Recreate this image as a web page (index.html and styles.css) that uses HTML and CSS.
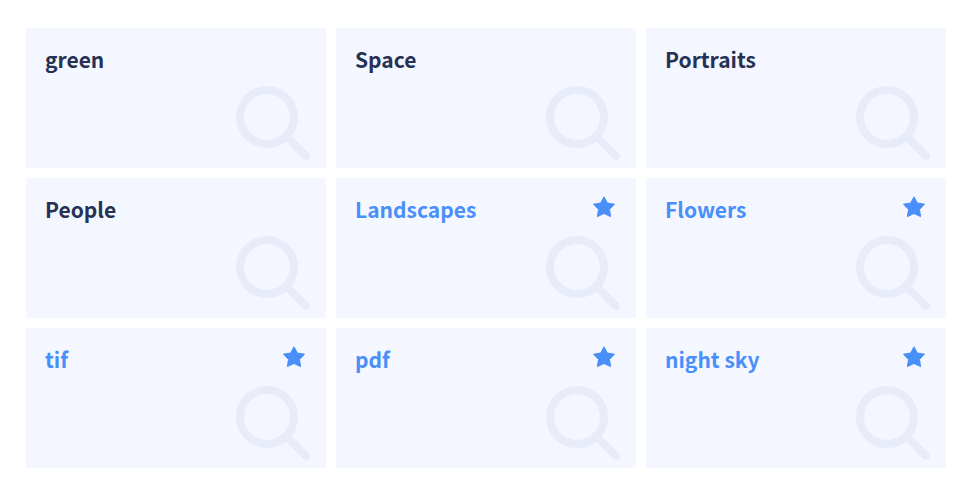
FILE: index.html
```
<!DOCTYPE html>
<html lang="en">
<head>
    <meta charset="UTF-8">
    <meta name="viewport" content="width=device-width, initial-scale=1.0">
    <title>Saved Searches</title>
    <link rel="stylesheet" href="styles.css">
</head>
<body>
    <!-- Shared icons -->
    <svg class="icon-defs" aria-hidden="true">
        <symbol id="icon-search" viewBox="0 0 75 75">
            <circle cx="31" cy="31" r="27" />
            <path d="M50 50 L70 70" />
        </symbol>
        <symbol id="icon-star" viewBox="0 0 24 24">
            <path d="M12 1.800 L15.300 8 L22.500 9.200 L17.500 14.400 L18.600 21.600 L12 18.500 L5.400 21.600 L6.500 14.400 L1.500 9.200 L8.700 8 Z" />
        </symbol>
    </svg>

    <main class="search-grid">
        <a class="card" href="#green">
            <h2 class="card-title">green</h2>
            <svg class="search-icon"><use href="#icon-search" /></svg>
        </a>
        <a class="card" href="#space">
            <h2 class="card-title">Space</h2>
            <svg class="search-icon"><use href="#icon-search" /></svg>
        </a>
        <a class="card" href="#portraits">
            <h2 class="card-title">Portraits</h2>
            <svg class="search-icon"><use href="#icon-search" /></svg>
        </a>
        <a class="card" href="#people">
            <h2 class="card-title">People</h2>
            <svg class="search-icon"><use href="#icon-search" /></svg>
        </a>
        <a class="card starred" href="#landscapes">
            <h2 class="card-title">Landscapes</h2>
            <svg class="star-icon"><use href="#icon-star" /></svg>
            <svg class="search-icon"><use href="#icon-search" /></svg>
        </a>
        <a class="card starred" href="#flowers">
            <h2 class="card-title">Flowers</h2>
            <svg class="star-icon"><use href="#icon-star" /></svg>
            <svg class="search-icon"><use href="#icon-search" /></svg>
        </a>
        <a class="card starred" href="#tif">
            <h2 class="card-title">tif</h2>
            <svg class="star-icon"><use href="#icon-star" /></svg>
            <svg class="search-icon"><use href="#icon-search" /></svg>
        </a>
        <a class="card starred" href="#pdf">
            <h2 class="card-title">pdf</h2>
            <svg class="star-icon"><use href="#icon-star" /></svg>
            <svg class="search-icon"><use href="#icon-search" /></svg>
        </a>
        <a class="card starred" href="#night-sky">
            <h2 class="card-title">night sky</h2>
            <svg class="star-icon"><use href="#icon-star" /></svg>
            <svg class="search-icon"><use href="#icon-search" /></svg>
        </a>
    </main>
</body>
</html>
```

FILE: styles.css
```
:root {
    --card-bg: #f4f7ff;
    --icon-color: #e8ebf8;
    --text-primary: #263154;
    --starred: #498ff9;
}

* {
    margin: 0;
    padding: 0;
    box-sizing: border-box;
}

body {
    font-family: 'Source Sans Pro', 'Noto Sans CJK SC', sans-serif;
    background: #ffffff;
    color: var(--text-primary);
}

.icon-defs {
    display: none;
}

.search-grid {
    display: grid;
    grid-template-columns: repeat(auto-fill, minmax(280px, 1fr));
    gap: 10px;
    padding: 28px 30px 28px 26px;
}

.card {
    display: grid;
    grid-template-columns: 1fr auto;
    grid-template-rows: 1fr auto;
    min-height: 140px;
    padding: 17px 15px 7px 19px;
    background: var(--card-bg);
    color: inherit;
    text-decoration: none;
}

.card:hover {
    background: #edf2ff;
}

.card-title {
    font-size: 21px;
    font-weight: 700;
    line-height: 28px;
}

.starred {
    color: var(--starred);
}

.star-icon {
    width: 24px;
    height: 24px;
    margin-right: 5px;
    fill: currentColor;
    stroke: currentColor;
    stroke-width: 1;
    stroke-linejoin: round;
}

.search-icon {
    grid-column: 1 / -1;
    grid-row: 2;
    justify-self: end;
    width: 75px;
    height: 75px;
    fill: none;
    stroke: var(--icon-color);
    stroke-width: 8;
    stroke-linecap: round;
}
```
